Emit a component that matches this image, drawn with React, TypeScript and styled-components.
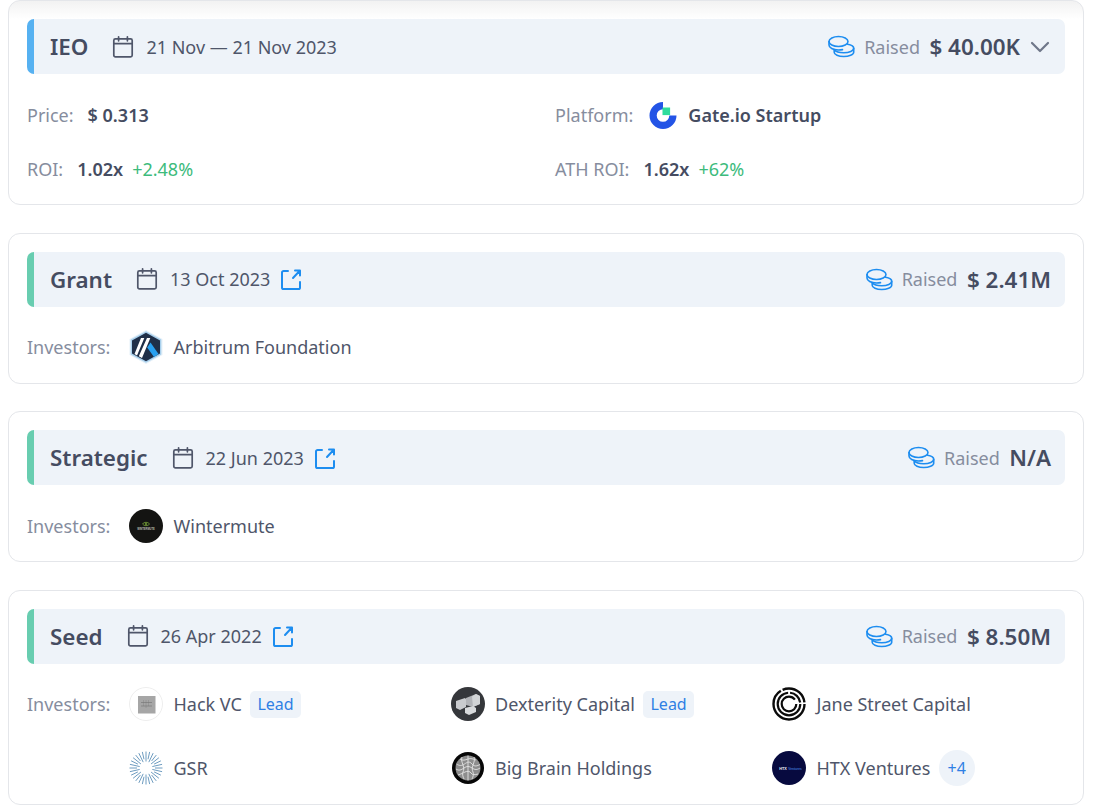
import React from "react";
import styled, { createGlobalStyle } from "styled-components";

const GlobalStyle = createGlobalStyle`
  html, body {
    margin: 0;
    padding: 0;
    background: #ffffff;
    font-family: "Noto Sans", "Open Sans", sans-serif;
    color: #454c61;
  }
`;

const Page = styled.div`
  width: 1076px;
  margin-left: 8px;
  display: flex;
  flex-direction: column;
  gap: 27.5px;
  padding-bottom: 6px;
`;

const Card = styled.section<{ $faded?: boolean }>`
  box-sizing: border-box;
  border: 1px solid #e4e6ea;
  border-radius: 12px;
  padding: 18px 18px 0;
  background: ${(p) =>
    p.$faded ? "linear-gradient(#f2f2f2 0, #ffffff 18px)" : "#ffffff"};
`;

const Header = styled.header<{ $accent: string }>`
  box-sizing: border-box;
  height: 55px;
  display: flex;
  align-items: center;
  padding: 0 14px 0 16px;
  border-left: 7px solid ${(p) => p.$accent};
  border-radius: 7px;
  background: #eef3f9;
`;

const Title = styled.h3`
  margin: 0 23px 0 0;
  font-size: 22.4px;
  font-weight: 600;
  color: #454c61;
`;

const DateText = styled.span`
  margin-left: 11px;
  font-size: 18px;
  color: #4f566a;
`;

const CalendarWrap = styled.span`
  display: flex;
  color: #4f566a;
`;

const LinkWrap = styled.a`
  display: flex;
  margin-left: 10px;
  color: #1d8df0;
`;

const Raised = styled.div`
  margin-left: auto;
  display: flex;
  align-items: center;
`;

const RaisedLabel = styled.span`
  margin: 0 9.5px 0 9px;
  font-size: 18px;
  color: #868d9e;
`;

const RaisedValue = styled.span`
  font-size: 22.4px;
  font-weight: 600;
  color: #454c61;
`;

const Chevron = styled.span`
  display: flex;
  margin-left: 9px;
  color: #6f7789;
`;

const StatsGrid = styled.div`
  display: grid;
  grid-template-columns: 528px 1fr;
  grid-auto-rows: 54px;
  padding: 14px 0 8.4px;
`;

const Stat = styled.div`
  display: flex;
  align-items: center;
  font-size: 18px;
`;

const Label = styled.span`
  color: #868d9e;
  font-size: 18px;
`;

const StrongValue = styled.span`
  margin-left: 14px;
  font-weight: 600;
  color: #454c61;
`;

const Gain = styled.span`
  margin-left: 9px;
  color: #3dbb7c;
`;

const PlatformLogo = styled.span`
  display: flex;
  margin-left: 15px;
`;

const PlatformName = styled.span`
  margin-left: 10px;
  font-weight: 600;
  color: #454c61;
`;

const InvestorsRow = styled.div`
  display: flex;
  align-items: flex-start;
  padding: 23.5px 0 18.5px;
`;

const InvestorsLabel = styled(Label)`
  width: 102px;
  flex: none;
  line-height: 34px;
`;

const InvestorGrid = styled.div`
  flex: 1;
  display: grid;
  grid-template-columns: repeat(3, 1fr);
  column-gap: 28.5px;
  row-gap: 30px;
`;

const Investor = styled.div`
  display: flex;
  align-items: center;
  height: 34px;
`;

const Logo = styled.span`
  width: 34px;
  height: 34px;
  flex: none;
  display: flex;
`;

const InvestorName = styled.span`
  margin-left: 10.5px;
  font-size: 18px;
  color: #4f566a;
`;

const Chip = styled.span`
  margin-left: 8.5px;
  height: 27px;
  padding: 0 7px;
  display: flex;
  align-items: center;
  border-radius: 5px;
  background: #eef3f9;
  color: #2f80e4;
  font-size: 16px;
`;

const MoreChip = styled(Chip)`
  width: 36px;
  height: 36px;
  padding: 0;
  justify-content: center;
  border-radius: 50%;
`;

const CalendarIcon = () => (
  <CalendarWrap>
    <svg width="24" height="24" viewBox="0 0 24 24" fill="none" stroke="currentColor" strokeWidth="1.7" strokeLinecap="round">
      <rect x="2.800" y="3.800" width="18.400" height="18" rx="1.600" />
      <path d="M2.800 8.600h18.400M7.600 1.800v4M16.400 1.800v4" />
    </svg>
  </CalendarWrap>
);

const LinkIcon = () => (
  <LinkWrap href="#">
    <svg width="22" height="22" viewBox="0 0 22 22" fill="none" stroke="currentColor" strokeWidth="2" strokeLinecap="round" strokeLinejoin="round">
      <path d="M8 3H3.600A1.600 1.600 0 0 0 2 4.600v14.800A1.600 1.600 0 0 0 3.600 21h14.800a1.600 1.600 0 0 0 1.600-1.600V14" />
      <path d="M13 10l6.500-7M15 2.500h5V7.500" />
    </svg>
  </LinkWrap>
);

const CoinsIcon = () => (
  <svg width="27" height="23" viewBox="0 0 27 23" fill="none" stroke="#1d8df0" strokeWidth="1.6" strokeLinecap="round">
    <ellipse cx="10.500" cy="6.500" rx="9.500" ry="5" />
    <path d="M1 6.500v3.500c0 2.800 4 5 9.500 5 1.400 0 2.800-.1 4-.4" />
    <path d="M19.600 9.300c3.600.6 6.100 2.100 6.100 4 0 2.500-4.300 4.400-10 4.400-4.200 0-8-1.200-9.400-3" />
    <path d="M6.200 14.700v2.500c0 2.400 4.200 4.300 9.500 4.300s10-1.900 10-4.300v-3.900" />
  </svg>
);

const ChevronIcon = () => (
  <Chevron>
    <svg width="22" height="22" viewBox="0 0 22 22" fill="none" stroke="currentColor" strokeWidth="2.200" strokeLinecap="round" strokeLinejoin="round">
      <path d="M3 7l8 8 8-8" />
    </svg>
  </Chevron>
);

const GateLogo = () => (
  <svg width="30" height="30" viewBox="0 0 30 30">
    <path d="M15 2a13.500 13.500 0 1 0 13.500 13.500H21.300A6.300 6.300 0 1 1 15 9.200z" fill="#2354e6" />
    <rect x="14.500" y="7.500" width="7.600" height="7.600" fill="#2fdc9c" />
  </svg>
);

const ArbitrumLogo = () => (
  <svg width="34" height="34" viewBox="0 0 34 34">
    <path d="M17 0l16.500 9v16L17 34 .5 25V9z" fill="#e6f1f9" />
    <path d="M17 1.300l15.300 8.300v14.800L17 32.700 1.700 24.400V9.600z" fill="#a9d0ec" />
    <path d="M17 2.800l14 7.600v13.200l-14 7.600-14-7.600V10.400z" fill="#1f2f48" />
    <path d="M21.500 12.500l8 11.500-4.500 3-6.800-9.500z" fill="#28a0f0" />
    <path d="M18 8h3.300l-8.300 20-3.200-1.800zM12 8h3.300L8 25.500 5.500 24z" fill="#ffffff" />
  </svg>
);

const LogoText = styled.text`
  font-family: "Liberation Sans", sans-serif;
  font-weight: 700;
  text-anchor: middle;
`;

const WintermuteLogo = () => (
  <svg width="34" height="34" viewBox="0 0 34 34">
    <circle cx="17" cy="17" r="17" fill="#141412" />
    <path d="M13.500 15c1.800-2.200 5.200-2.200 7 0-1.800 2.200-5.200 2.200-7 0z" fill="none" stroke="#6f9a34" strokeWidth=".9" />
    <circle cx="17" cy="15" r=".9" fill="#7fae3a" />
    <LogoText x="17" y="20.800" fontSize="2.600" fill="#b8bcae">WINTERMUTE</LogoText>
  </svg>
);

const HackLogo = () => (
  <svg width="34" height="34" viewBox="0 0 34 34">
    <circle cx="17" cy="17" r="16.500" fill="#ffffff" stroke="#eeeeee" />
    <rect x="9" y="9" width="17.500" height="17.500" fill="#a6a6a6" />
    <path d="M12 15.500h11M12 19h11" stroke="#787878" strokeWidth=".7" />
    <path d="M14.500 13.500v6M17 13.500v8M19.500 13.500v6" stroke="#787878" strokeWidth=".7" strokeDasharray="1 1" />
  </svg>
);

const DexterityLogo = () => (
  <svg width="34" height="34" viewBox="0 0 34 34">
    <circle cx="17" cy="17" r="17" fill="#35373b" />
    <path d="M5 14l9-3 1 1v8l-6 3-4-2z" fill="#c9cbce" />
    <path d="M15 11l10-4 4 2v8l-7 3-7-2z" fill="#b2b4b8" />
    <path d="M21 9.500l4-2.500 4 2v8l-7 3z" fill="#d2d4d6" />
    <path d="M14 21l8-2 3 2v4l-7 3-4-2z" fill="#d8dadc" />
  </svg>
);

const JaneStreetLogo = () => (
  <svg width="34" height="34" viewBox="0 0 34 34" fill="none" stroke="#0b0b0b">
    <circle cx="17" cy="17" r="15.500" strokeWidth="2.400" strokeDasharray="64 2 29 2.400" />
    <circle cx="17" cy="17" r="11.300" strokeWidth="2.200" strokeDasharray="52 2 15 2" />
    <circle cx="17" cy="17" r="7.300" strokeWidth="2.200" strokeDasharray="41 4.900" />
  </svg>
);

const GsrLogo = () => {
  const rays = Array.from({ length: 28 }, (_, i) => (i * Math.PI * 2) / 28);
  return (
    <svg width="34" height="34" viewBox="0 0 34 34" stroke="#6e9cc0" strokeWidth="1">
      {rays.map((a, i) => {
        const inner = i % 2 ? 6.5 : 9;
        return (
          <line
            key={i}
            x1={17 + Math.cos(a) * inner}
            y1={17 + Math.sin(a) * inner}
            x2={17 + Math.cos(a) * 16.5}
            y2={17 + Math.sin(a) * 16.5}
          />
        );
      })}
    </svg>
  );
};

const BigBrainLogo = () => (
  <svg width="34" height="34" viewBox="0 0 34 34" fill="none">
    <circle cx="17" cy="17" r="16" fill="#070707" />
    <circle cx="17" cy="17" r="12.500" fill="#8d8d8d" />
    <g stroke="#e4e4e4" strokeWidth=".9">
      <path d="M5.500 13c3 2 5 2 8 0s5-3 7.500 0 5 2 8 .5M5 18c3 2 5 1 8-1s5-2 8 0 5 2 8 0M7 24c3-1 5-2 7-3s5-1 6 1 4 2 7 1M9 8c3 2 5 1 8 0s5 0 8 1" />
      <path d="M11 6c-1 3 0 5 1 8s1 5 0 7 0 5 1 7M17 4.500v25M23 6c1 3 0 5-1 8s-1 5 0 7 0 5-1 7" />
    </g>
  </svg>
);

const HtxLogo = () => (
  <svg width="34" height="34" viewBox="0 0 34 34">
    <circle cx="17" cy="17" r="17" fill="#070a3f" />
    <LogoText x="11" y="18.500" fontSize="3.800" fill="#f0f2fa">HTX</LogoText>
    <LogoText x="23" y="18.500" fontSize="3.200" fill="#3f6fd0">Ventures</LogoText>
  </svg>
);

type InvestorItem = {
  name: string;
  logo: React.ReactNode;
  lead?: boolean;
  more?: string;
};

const rounds: {
  title: string;
  date: string;
  raised: string;
  investors: InvestorItem[];
}[] = [
  {
    title: "Grant",
    date: "13 Oct 2023",
    raised: "$ 2.41M",
    investors: [{ name: "Arbitrum Foundation", logo: <ArbitrumLogo /> }],
  },
  {
    title: "Strategic",
    date: "22 Jun 2023",
    raised: "N/A",
    investors: [{ name: "Wintermute", logo: <WintermuteLogo /> }],
  },
  {
    title: "Seed",
    date: "26 Apr 2022",
    raised: "$ 8.50M",
    investors: [
      { name: "Hack VC", logo: <HackLogo />, lead: true },
      { name: "Dexterity Capital", logo: <DexterityLogo />, lead: true },
      { name: "Jane Street Capital", logo: <JaneStreetLogo /> },
      { name: "GSR", logo: <GsrLogo /> },
      { name: "Big Brain Holdings", logo: <BigBrainLogo /> },
      { name: "HTX Ventures", logo: <HtxLogo />, more: "+4" },
    ],
  },
];

const App: React.FC = () => (
  <>
    <GlobalStyle />
    <Page>
      <Card $faded>
        <Header $accent="#56b1f1">
          <Title>IEO</Title>
          <CalendarIcon />
          <DateText>21 Nov — 21 Nov 2023</DateText>
          <Raised>
            <CoinsIcon />
            <RaisedLabel>Raised</RaisedLabel>
            <RaisedValue>$ 40.00K</RaisedValue>
            <ChevronIcon />
          </Raised>
        </Header>
        <StatsGrid>
          <Stat>
            <Label>Price:</Label>
            <StrongValue>$ 0.313</StrongValue>
          </Stat>
          <Stat>
            <Label>Platform:</Label>
            <PlatformLogo>
              <GateLogo />
            </PlatformLogo>
            <PlatformName>Gate.io Startup</PlatformName>
          </Stat>
          <Stat>
            <Label>ROI:</Label>
            <StrongValue>1.02x</StrongValue>
            <Gain>+2.48%</Gain>
          </Stat>
          <Stat>
            <Label>ATH ROI:</Label>
            <StrongValue>1.62x</StrongValue>
            <Gain>+62%</Gain>
          </Stat>
        </StatsGrid>
      </Card>
      {rounds.map((round) => (
        <Card key={round.title}>
          <Header $accent="#68cdb0">
            <Title>{round.title}</Title>
            <CalendarIcon />
            <DateText>{round.date}</DateText>
            <LinkIcon />
            <Raised>
              <CoinsIcon />
              <RaisedLabel>Raised</RaisedLabel>
              <RaisedValue>{round.raised}</RaisedValue>
            </Raised>
          </Header>
          <InvestorsRow>
            <InvestorsLabel>Investors:</InvestorsLabel>
            <InvestorGrid>
              {round.investors.map((inv) => (
                <Investor key={inv.name}>
                  <Logo>{inv.logo}</Logo>
                  <InvestorName>{inv.name}</InvestorName>
                  {inv.lead && <Chip>Lead</Chip>}
                  {inv.more && <MoreChip>{inv.more}</MoreChip>}
                </Investor>
              ))}
            </InvestorGrid>
          </InvestorsRow>
        </Card>
      ))}
    </Page>
  </>
);

export default App;
